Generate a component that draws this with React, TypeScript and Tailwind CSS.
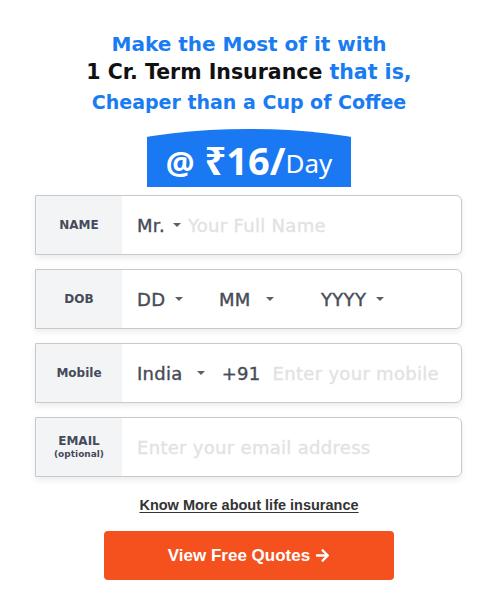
import { FaArrowRight } from "react-icons/fa";

function Caret({ gap = "ml-[10px]" }: { gap?: string }) {
  return <span className={`inline-block ${gap} border-x-[4px] border-t-[4px] border-x-transparent border-t-[#5a5f6a] align-middle`} />;
}

function Row({ label, children }: { label: React.ReactNode; children: React.ReactNode }) {
  return (
    <div className="flex h-[60px] border border-[#c9c9c9] rounded-r-md bg-white shadow-[0_3px_6px_rgba(0,0,0,0.08)] overflow-hidden">
      <div className="w-[86px] shrink-0 bg-[#f3f4f6] flex flex-col items-center justify-center text-[#454b5a] font-bold text-[12px] leading-[14px] text-center">
        {label}
      </div>
      <div className="flex-1 flex items-center pl-[15px] text-[18px] tracking-[0.3px] text-[#474c57]">{children}</div>
    </div>
  );
}

function Val({ children, className = "" }: { children: React.ReactNode; className?: string }) {
  return <span className={`[-webkit-text-stroke:0.4px_#474c57] ${className}`}>{children}</span>;
}

function Ph({ children, className = "" }: { children: React.ReactNode; className?: string }) {
  return (
    <span className={`text-[#e2e2e2] whitespace-nowrap [-webkit-text-stroke:0.3px_#e2e2e2] ${className}`}>{children}</span>
  );
}

export default function App() {
  return (
    <div className="w-[498px] h-[607px] bg-white font-['DejaVu_Sans','Noto_Sans',sans-serif]">
      <div className="pt-[30px] text-center font-bold">
        <div className="text-[20px] leading-[28px] text-[#1a7cf2]">Make the Most of it with</div>
        <div className="text-[20.5px] leading-[28px] text-[#111]">
          1 Cr. Term Insurance <span className="text-[#1a7cf2]">that is,</span>
        </div>
        <div className="text-[19px] leading-[26px] text-[#1a7cf2] mt-[3px]">Cheaper than a Cup of Coffee</div>
      </div>

      <div className="flex justify-center mt-[14px]">
        <div className="w-[204px] h-[58px] bg-[#1a78f2] [clip-path:ellipse(100%_100%_at_50%_100%)] flex items-end justify-center pb-[8px] text-white">
          <span className="text-[32px] font-bold leading-none font-['Noto_Sans',sans-serif]">@</span>
          <span className="text-[38px] font-bold leading-none ml-[10px] font-['Noto_Sans',sans-serif]">₹16/</span>
          <span className="text-[26px] leading-none mb-[3px] font-['Noto_Sans',sans-serif]">Day</span>
        </div>
      </div>

      <div className="ml-[35px] mt-[8px] flex flex-col gap-[14px] w-[427px]">
        <Row label="NAME">
          <Val>Mr.</Val>
          <Caret gap="ml-[8px]" />
          <Ph className="ml-[7px]">Your Full Name</Ph>
        </Row>
        <Row label="DOB">
          <span className="w-[82px] flex items-center"><Val>DD</Val><Caret gap="ml-[10px]" /></span>
          <span className="w-[102px] flex items-center"><Val>MM</Val><Caret gap="ml-[15px]" /></span>
          <span className="flex items-center"><Val>YYYY</Val><Caret gap="ml-[10px]" /></span>
        </Row>
        <Row label="Mobile">
          <Val>India</Val>
          <Caret gap="ml-[14px]" />
          <Val className="ml-[17px]">+91</Val>
          <Ph className="ml-[12px]">Enter your mobile</Ph>
        </Row>
        <Row
          label={
            <>
              <span>EMAIL</span>
              <span className="text-[9px] leading-[12px]">(optional)</span>
            </>
          }
        >
          <Ph>Enter your email address</Ph>
        </Row>
      </div>

      <div className="text-center mt-[16px] font-['Liberation_Sans',sans-serif]">
        <span className="text-[14.5px] font-bold text-[#333] underline underline-offset-2">Know More about life insurance</span>
      </div>

      <div className="flex justify-center mt-[14px]">
        <button className="w-[290px] h-[49px] rounded bg-[#f4511e] text-white font-bold text-[17px] flex items-center justify-center gap-[5px] font-['Liberation_Sans',sans-serif]">
          View Free Quotes <FaArrowRight className="text-[15px]" />
        </button>
      </div>
    </div>
  );
}
